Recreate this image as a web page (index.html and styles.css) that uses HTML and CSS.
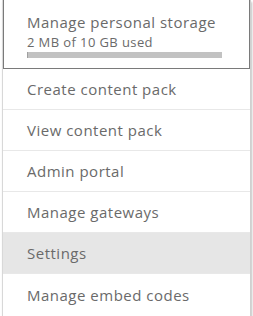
FILE: index.html
```html
<!DOCTYPE html>
<html>
<head>
<meta charset="utf-8">
<link rel="stylesheet" href="styles.css">
</head>
<body>
<div class="menu">
  <div class="storage">
    <div class="storage-title">Manage personal storage</div>
    <div class="storage-used">2 MB of 10 GB used</div>
    <div class="bar"><div class="bar-fill" style="width:0.1%"></div></div>
  </div>
  <ul class="items">
    <li class="item">Create content pack</li>
    <li class="item">View content pack</li>
    <li class="item">Admin portal</li>
    <li class="item">Manage gateways</li>
    <li class="item active">Settings</li>
    <li class="item">Manage embed codes</li>
  </ul>
</div>
</body>
</html>
```
FILE: styles.css
```css
html, body {
  margin: 0;
  padding: 0;
  background: #ffffff;
}
body {
  font-family: "Open Sans", "Noto Sans", sans-serif;
  color: #6a6a6a;
}
.menu {
  margin-left: 2px;
  width: 247px;
  background: #ffffff;
  border-left: 1px solid #d8d8d8;
  border-right: 1px solid #d0d0d0;
  box-shadow: 1px 2px 2px rgba(0, 0, 0, 0.25);
}
.storage {
  box-sizing: border-box;
  height: 69px;
  border: 1px solid #7a7a7a;
  border-top: none;
  padding: 12px 0 0 23px;
}
.storage-title {
  font-size: 15px;
  letter-spacing: 0.5px;
  line-height: 21px;
}
.storage-used {
  font-size: 13px;
  letter-spacing: 0.4px;
  line-height: 16px;
  margin-top: 1px;
}
.bar {
  width: 195px;
  height: 6px;
  margin-top: 2px;
  background: #c2c2c2;
}
.bar-fill {
  height: 100%;
  background: #a0a0a0;
}
.items {
  list-style: none;
  margin: 0;
  padding: 0;
}
.item {
  height: 40px;
  line-height: 40px;
  padding-left: 24px;
  font-size: 15px;
  letter-spacing: 0.5px;
  border-bottom: 1px solid #e8e8e8;
}
.item:last-child {
  border-bottom: none;
  height: 42px;
  line-height: 42px;
}
.item.active {
  background: #e6e6e6;
}
```
